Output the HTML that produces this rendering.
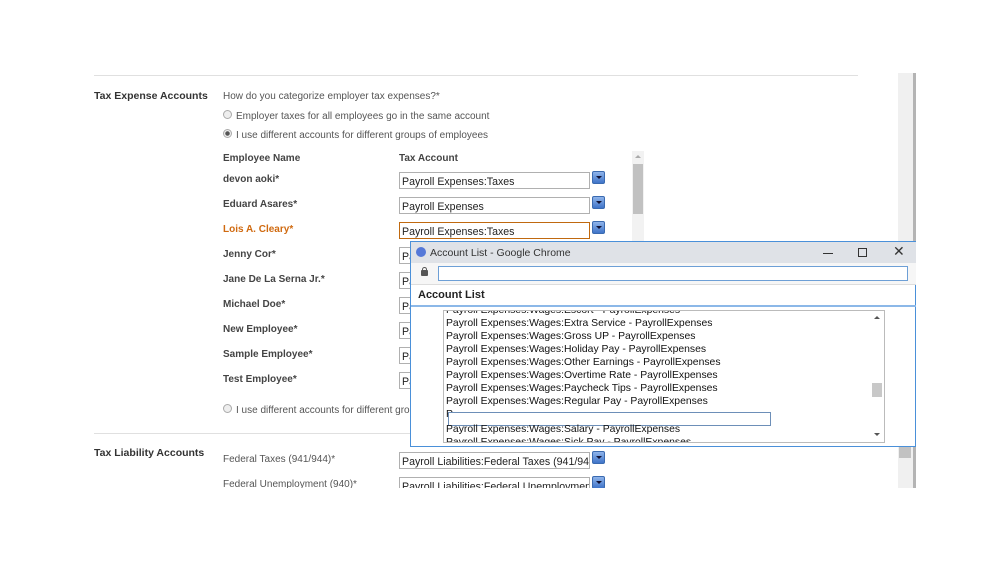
<!DOCTYPE html>
<html><head><meta charset="utf-8"><style>
*{margin:0;padding:0;box-sizing:border-box}
body{width:999px;height:562px;background:#fff;position:relative;overflow:hidden;font-family:"Liberation Sans",Arial,sans-serif;}
.a{position:absolute;white-space:nowrap}
.lbl{font-size:10px;color:#444;font-weight:bold}
.t{font-size:10px;color:#555}
.sec{font-size:10.5px;font-weight:bold;color:#333}
.inp{position:absolute;width:191px;height:17px;border:1px solid #b0b0b0;background:#fff;font-size:10.6px;color:#222;padding:3px 0 0 2px;overflow:hidden;white-space:nowrap}
.btn{position:absolute;width:13px;height:13px;border:1px solid #3a6ab0;border-radius:2px;background:linear-gradient(#8fb4ea,#3f74c8)}
.btn:after{content:"";position:absolute;left:3px;top:4px;border-left:3px solid transparent;border-right:3px solid transparent;border-top:3px solid #113;}
.rad{position:absolute;width:9px;height:9px;border:1px solid #aaa;border-radius:50%;background:#eee}
.li{position:absolute;left:446px;font-size:10.4px;color:#111;white-space:nowrap}
</style></head><body>
<div class="a" style="left:94px;top:75px;width:764px;height:1px;background:#e0e0e0"></div>
<div class="a" style="left:898px;top:73px;width:15px;height:415px;background:#f0f0f0"></div>
<div class="a" style="left:913px;top:73px;width:3px;height:415px;background:#b4b4b4"></div>
<div class="a" style="left:899px;top:445px;width:12px;height:13px;background:#c2c2c2"></div>

<div class="a sec" style="left:94px;top:90px">Tax Expense Accounts</div>
<div class="a t" style="left:223px;top:91px">How do you categorize employer tax expenses?*</div>
<div class="rad" style="left:223px;top:110px"></div>
<div class="a t" style="left:236px;top:111px">Employer taxes for all employees go in the same account</div>
<div class="rad" style="left:223px;top:129px;background:radial-gradient(circle,#555 0 2px,#eee 2.5px)"></div>
<div class="a t" style="left:236px;top:130px">I use different accounts for different groups of employees</div>
<div class="a lbl" style="left:223px;top:153px">Employee Name</div>
<div class="a lbl" style="left:399px;top:153px">Tax Account</div>

<div class="a" style="left:632px;top:151px;width:12px;height:282px;background:#f2f2f2"></div>
<div class="a" style="left:633px;top:164px;width:10px;height:50px;background:#c1c1c1"></div>
<div class="a" style="left:635px;top:155px;border-left:3px solid transparent;border-right:3px solid transparent;border-bottom:3px solid #aaa"></div>

<div class="a lbl" style="left:223px;top:174px">devon aoki*</div>
<div class="a lbl" style="left:223px;top:199px">Eduard Asares*</div>
<div class="a lbl" style="left:223px;top:224px;color:#d06a10">Lois A. Cleary*</div>
<div class="a lbl" style="left:223px;top:249px">Jenny Cor*</div>
<div class="a lbl" style="left:223px;top:274px">Jane De La Serna Jr.*</div>
<div class="a lbl" style="left:223px;top:299px">Michael Doe*</div>
<div class="a lbl" style="left:223px;top:324px">New Employee*</div>
<div class="a lbl" style="left:223px;top:349px">Sample Employee*</div>
<div class="a lbl" style="left:223px;top:374px">Test Employee*</div>

<div class="inp" style="left:399px;top:172px">Payroll Expenses:Taxes</div><div class="btn" style="left:592px;top:171px"></div>
<div class="inp" style="left:399px;top:197px">Payroll Expenses</div><div class="btn" style="left:592px;top:196px"></div>
<div class="inp" style="left:399px;top:222px;border:1px solid #c0690f">Payroll Expenses:Taxes</div><div class="btn" style="left:592px;top:221px"></div>
<div class="inp" style="left:399px;top:247px">Pa</div>
<div class="inp" style="left:399px;top:272px">Pa</div>
<div class="inp" style="left:399px;top:297px">Pa</div>
<div class="inp" style="left:399px;top:322px">Pa</div>
<div class="inp" style="left:399px;top:347px">Pa</div>
<div class="inp" style="left:399px;top:372px">Pa</div>

<div class="rad" style="left:223px;top:404px"></div>
<div class="a t" style="left:236px;top:405px">I use different accounts for different groups</div>
<div class="a" style="left:94px;top:433px;width:764px;height:1px;background:#e0e0e0"></div>

<div class="a sec" style="left:94px;top:447px">Tax Liability Accounts</div>
<div class="a t" style="left:223px;top:454px">Federal Taxes (941/944)*</div>
<div class="a t" style="left:223px;top:479px">Federal Unemployment (940)*</div>
<div class="inp" style="left:399px;top:452px">Payroll Liabilities:Federal Taxes (941/944</div><div class="btn" style="left:592px;top:451px"></div>
<div class="inp" style="left:399px;top:477px">Payroll Liabilities:Federal Unemployment</div><div class="btn" style="left:592px;top:476px"></div>
<div class="a" style="left:0;top:488px;width:999px;height:74px;background:#fff"></div>

<!-- popup -->
<div class="a" style="left:410px;top:241px;width:506px;height:206px;border:1px solid #4a90d9;background:#fff"></div>
<div class="a" style="left:411px;top:242px;width:505px;height:21px;background:#dfe2e7"></div>
<div class="a" style="left:416px;top:247px;width:10px;height:10px;border-radius:50%;background:#5478d8"></div>
<div class="a" style="left:430px;top:247px;font-size:10.5px;color:#333">Account List - Google Chrome</div>
<div class="a" style="left:823px;top:253px;width:10px;height:1px;background:#333"></div>
<div class="a" style="left:858px;top:248px;width:9px;height:9px;border:1px solid #333"></div>
<div class="a" style="left:893px;top:243px;font-size:14px;color:#333">✕</div>
<div class="a" style="left:411px;top:263px;width:505px;height:22px;background:#f6f6f6;border-bottom:1px solid #ddd"></div>
<div class="a" style="left:421px;top:270px;width:7px;height:6px;background:#555;border-radius:1px"></div>
<div class="a" style="left:422px;top:267px;width:5px;height:5px;border:1px solid #555;border-bottom:none;border-radius:3px 3px 0 0"></div>
<div class="a" style="left:438px;top:266px;width:470px;height:15px;border:1px solid #6d9fd6;background:#fff"></div>
<div class="a" style="left:418px;top:289px;font-size:11px;font-weight:bold;color:#222">Account List</div>
<div class="a" style="left:411px;top:305px;width:505px;height:2px;background:#8cb8e8"></div>
<div class="a" style="left:443px;top:310px;width:442px;height:133px;border:1px solid #bbb;background:#fff"></div>
<div class="a" style="left:444px;top:311px;width:440px;height:131px;overflow:hidden">
<div class="li" style="left:2px;top:-6px">Payroll Expenses:Wages:Escort - PayrollExpenses</div>
<div class="li" style="left:2px;top:7px">Payroll Expenses:Wages:Extra Service - PayrollExpenses</div>
<div class="li" style="left:2px;top:20px">Payroll Expenses:Wages:Gross UP - PayrollExpenses</div>
<div class="li" style="left:2px;top:33px">Payroll Expenses:Wages:Holiday Pay - PayrollExpenses</div>
<div class="li" style="left:2px;top:46px">Payroll Expenses:Wages:Other Earnings - PayrollExpenses</div>
<div class="li" style="left:2px;top:59px">Payroll Expenses:Wages:Overtime Rate - PayrollExpenses</div>
<div class="li" style="left:2px;top:72px">Payroll Expenses:Wages:Paycheck Tips - PayrollExpenses</div>
<div class="li" style="left:2px;top:85px">Payroll Expenses:Wages:Regular Pay - PayrollExpenses</div>
<div class="li" style="left:2px;top:98px">P</div>
<div class="a" style="left:4px;top:101px;width:323px;height:14px;border:1px solid #6d8fb8;background:#fff"></div>
<div class="li" style="left:2px;top:113px">Payroll Expenses:Wages:Salary - PayrollExpenses</div>
<div class="li" style="left:2px;top:126px">Payroll Expenses:Wages:Sick Pay - PayrollExpenses</div>
<div class="a" style="left:424px;top:0;width:16px;height:131px;background:#fff"></div>
<div class="a" style="left:428px;top:72px;width:10px;height:14px;background:#c8c8c8"></div>
<div class="a" style="left:430px;top:5px;border-left:3px solid transparent;border-right:3px solid transparent;border-bottom:3px solid #555"></div>
<div class="a" style="left:430px;top:122px;border-left:3px solid transparent;border-right:3px solid transparent;border-top:3px solid #555"></div>
</div>
</body></html>
